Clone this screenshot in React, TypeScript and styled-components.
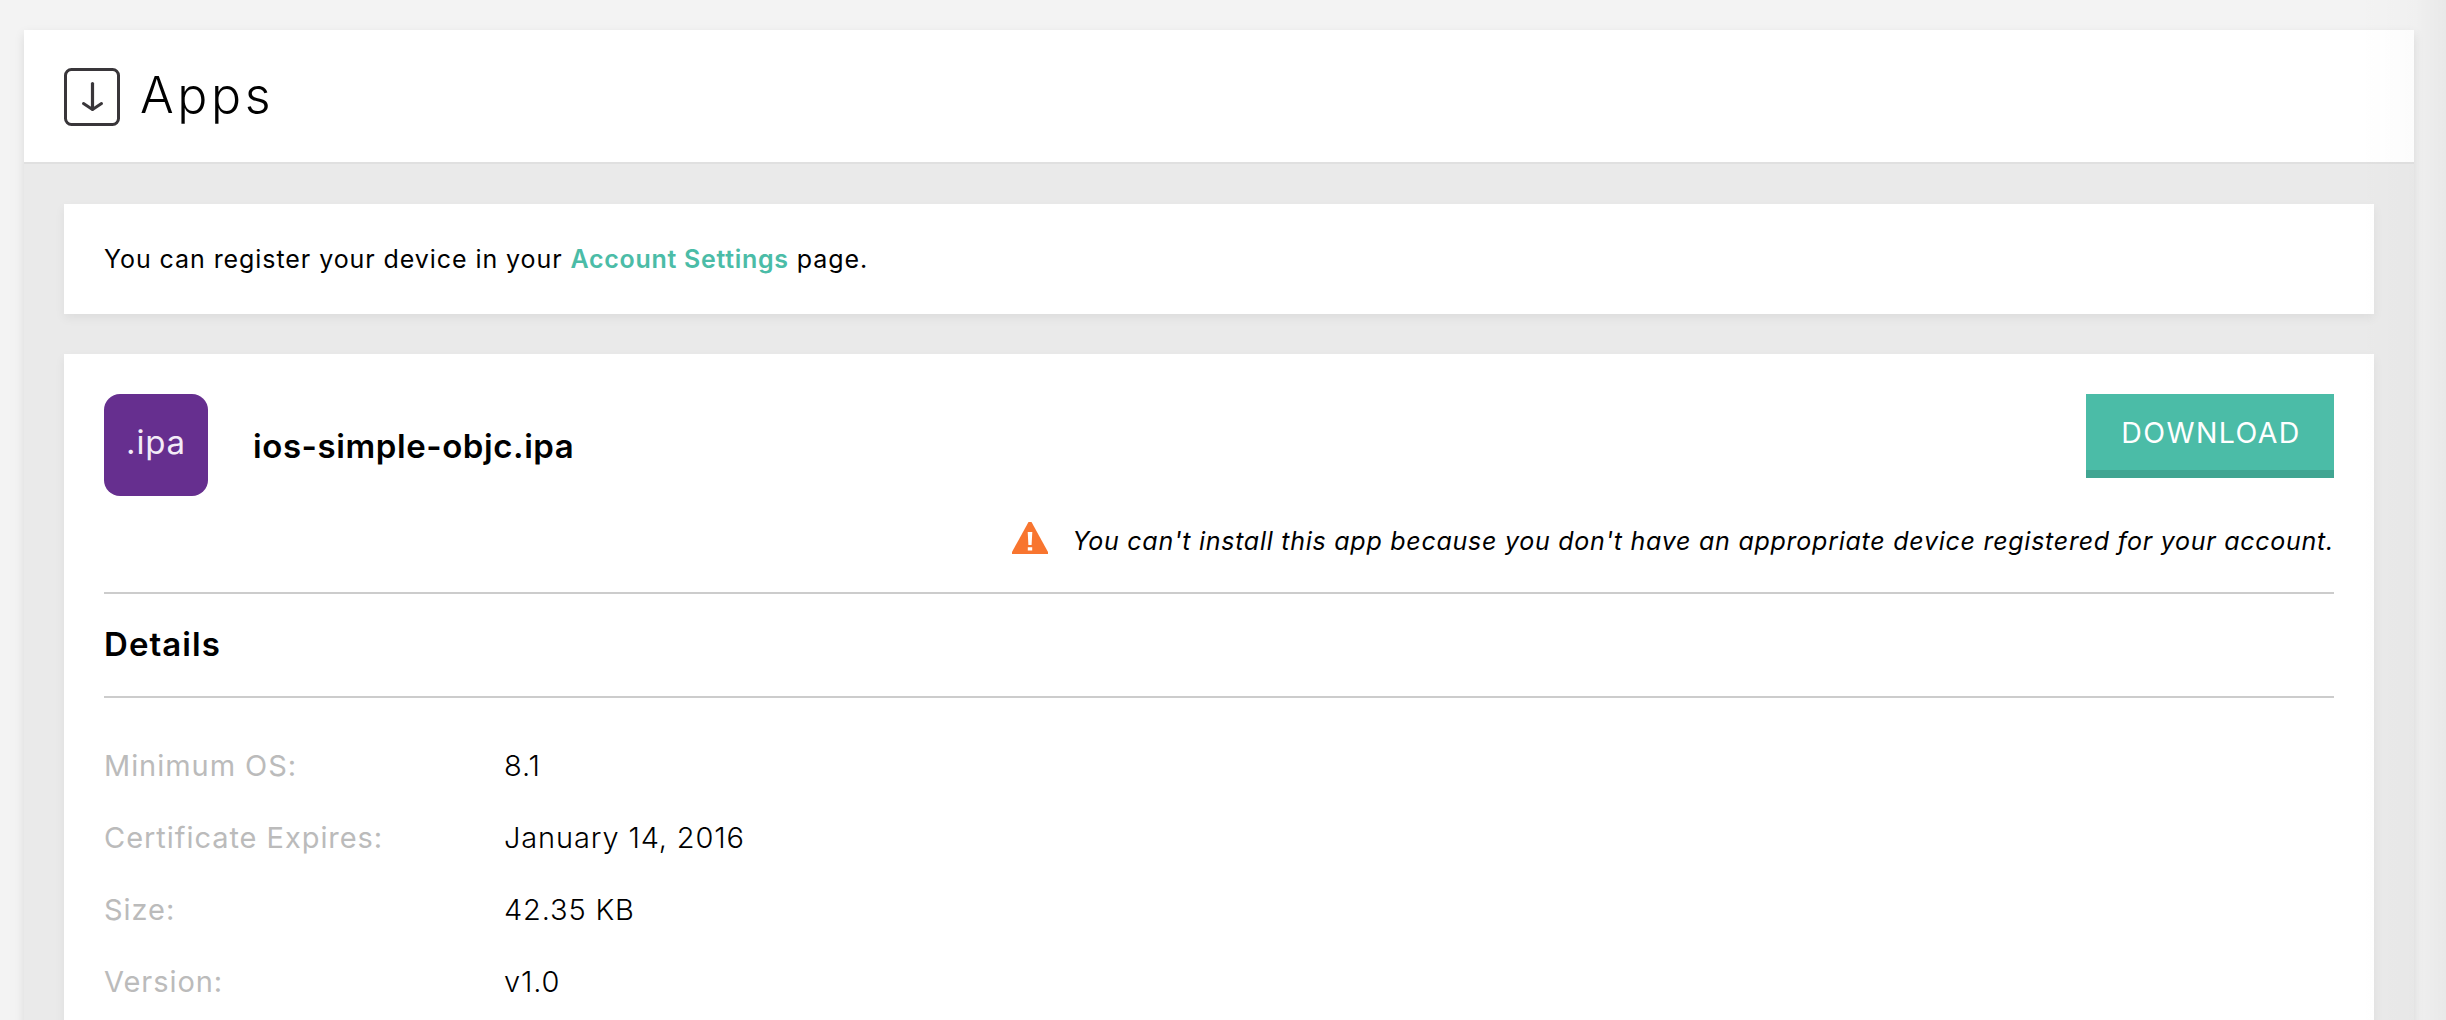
import React from "react";
import styled, { createGlobalStyle } from "styled-components";

const GlobalStyle = createGlobalStyle`
  * { box-sizing: border-box; }
  html, body { margin: 0; padding: 0; }
  body {
    height: 1020px;
    overflow: hidden;
    background: #f3f3f3;
    color: #000;
    font-family: Inter, "Liberation Sans", sans-serif;
    -webkit-font-smoothing: antialiased;
  }
`;

const Page = styled.div`
  height: 1020px;
  padding: 30px 32px 0 24px;
  overflow: hidden;
`;

const EdgeShade = styled.div`
  position: absolute;
  top: 0;
  right: 0;
  width: 90px;
  height: 1020px;
  pointer-events: none;
  background: linear-gradient(to right, rgba(0, 0, 0, 0), rgba(0, 0, 0, 0.012) 65%, rgba(0, 0, 0, 0.045));
`;

const Panel = styled.main`
  height: 1100px;
  background: #eaeaea;
  box-shadow: 0 4px 10px rgba(0, 0, 0, 0.1);
`;

const Header = styled.header`
  display: flex;
  align-items: flex-start;
  gap: 20px;
  height: 134px;
  padding: 0 40px;
  background: #fff;
  border-bottom: 2px solid #e0e0e0;
`;

const HeaderIcon = styled.svg`
  flex: none;
  width: 56px;
  height: 58px;
  margin-top: 38px;
`;

const Heading = styled.h1`
  margin: 0;
  font-size: 50px;
  font-weight: 300;
  line-height: 130px;
  letter-spacing: 3.6px;
`;

const Content = styled.div`
  display: flex;
  flex-direction: column;
  gap: 40px;
  padding: 40px;
`;

const Card = styled.section`
  background: #fff;
  box-shadow: 0 4px 10px rgba(0, 0, 0, 0.06);
`;

const Notice = styled(Card)`
  height: 110px;
  padding: 0 40px;
  font-size: 25px;
  line-height: 110px;
  letter-spacing: 0.93px;
`;

const Link = styled.a`
  color: #4bbca7;
  font-weight: 600;
  letter-spacing: 0.7px;
  text-decoration: none;
`;

const AppCard = styled(Card)`
  height: 760px;
  padding: 40px;
`;

const AppHead = styled.div`
  display: flex;
  align-items: flex-start;
  justify-content: space-between;
  height: 102px;
`;

const AppName = styled.div`
  display: flex;
  gap: 45px;
`;

const FileBadge = styled.div`
  width: 104px;
  height: 102px;
  border-radius: 16px;
  background: #662f8f;
  color: #f3ecf7;
  font-size: 33px;
  line-height: 97px;
  letter-spacing: 0.8px;
  text-align: center;
`;

const FileName = styled.h2`
  margin: 0;
  font-size: 33px;
  font-weight: 600;
  line-height: 104px;
  letter-spacing: 0.58px;
`;

const DownloadButton = styled.button`
  width: 248px;
  height: 84px;
  padding: 2px 0 0 2px;
  border: 0;
  border-bottom: 8px solid #41a592;
  background: #4bbca7;
  color: #fff;
  font-family: inherit;
  font-size: 28.5px;
  font-weight: 400;
  line-height: 74px;
  letter-spacing: 1.4px;
  text-align: center;
`;

const Warning = styled.div`
  display: flex;
  align-items: center;
  justify-content: flex-end;
  gap: 24px;
  height: 54px;
  margin: 18px 0 24px;
  font-size: 25px;
  font-style: italic;
  line-height: 54px;
  letter-spacing: 0.74px;
  white-space: nowrap;
`;

const WarningIcon = styled.svg`
  width: 36px;
  height: 32px;
  margin-bottom: 6px;
`;

const SectionTitle = styled.h2`
  margin: 0;
  height: 106px;
  border-top: 2px solid #ccc;
  border-bottom: 2px solid #ccc;
  font-size: 33px;
  font-weight: 600;
  line-height: 100px;
  letter-spacing: 1.05px;
`;

const Details = styled.dl`
  display: grid;
  grid-template-columns: 400px 1fr;
  grid-auto-rows: 72px;
  margin: 0;
  padding-top: 32px;
  font-size: 29px;
  font-weight: 400;
  line-height: 72px;
`;

const Label = styled.dt`
  color: #bbb;
  letter-spacing: 0.95px;
`;

const Value = styled.dd`
  margin: 0;
  font-weight: 300;
  letter-spacing: 0.85px;
`;

const details = [
  ["Minimum OS:", "8.1"],
  ["Certificate Expires:", "January 14, 2016"],
  ["Size:", "42.35 KB"],
  ["Version:", "v1.0"],
];

export default function App() {
  return (
    <>
      <GlobalStyle />
      <Page>
        <Panel>
          <Header>
            <HeaderIcon viewBox="0 0 56 58" fill="none" stroke="#39363a">
              <rect x="1.5" y="1.5" width="53" height="55" rx="6" strokeWidth="3" />
              <path d="M28.5 15.5V41" strokeWidth="3.2" strokeLinecap="round" />
              <path d="M19.5 35.5L28.5 41.5L37.5 35.5" strokeWidth="3" strokeLinecap="round" strokeLinejoin="round" />
            </HeaderIcon>
            <Heading>Apps</Heading>
          </Header>
          <Content>
            <Notice>
              You can register your device in your <Link>Account Settings</Link> page.
            </Notice>
            <AppCard>
              <AppHead>
                <AppName>
                  <FileBadge>.ipa</FileBadge>
                  <FileName>ios-simple-objc.ipa</FileName>
                </AppName>
                <DownloadButton>DOWNLOAD</DownloadButton>
              </AppHead>
              <Warning>
                <WarningIcon viewBox="0 0 36 32">
                  <path d="M16.5 0h3L36 30v2H0v-2z" fill="#f8752f" />
                  <path d="M15.7 10h4.6l-.7 13h-3.2zM15.8 25.2h4.4v3.4h-4.4z" fill="#fff" />
                </WarningIcon>
                <span>
                  You can't install this app because you don't have an appropriate device registered for your account.
                </span>
              </Warning>
              <SectionTitle>Details</SectionTitle>
              <Details>
                {details.map(([label, value]) => (
                  <React.Fragment key={label}>
                    <Label>{label}</Label>
                    <Value>{value}</Value>
                  </React.Fragment>
                ))}
              </Details>
            </AppCard>
          </Content>
        </Panel>
      </Page>
      <EdgeShade />
    </>
  );
}
